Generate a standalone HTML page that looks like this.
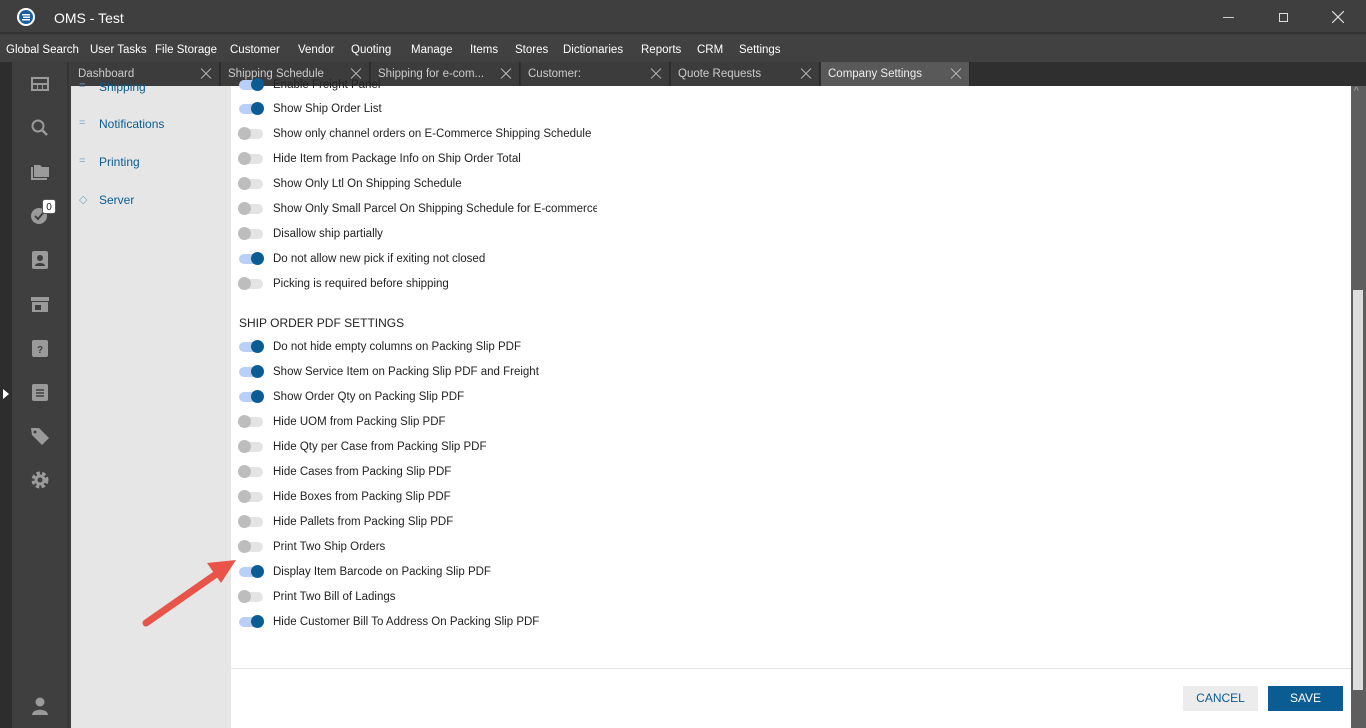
<!DOCTYPE html>
<html><head><style>
*{margin:0;padding:0;box-sizing:border-box}
body{width:1366px;height:728px;overflow:hidden;background:#3f3f3f;font-family:"Liberation Sans",sans-serif;position:relative}
.abs{position:absolute}
.title{left:0;top:0;width:1366px;height:34px;background:#3f3f3f;border-bottom:2px solid #333}
.menu{left:0;top:36px;width:1366px;height:26px;background:#414141;color:#fff;font-size:11.5px}
.menu span{position:absolute;top:8px}
.tabs{left:71px;top:62px;width:1295px;height:24px;background:#2f2f2f}
.tab{position:absolute;top:0;height:24px;width:149px;background:#3c3c3c;color:#ccc;font-size:11.5px;padding:6px 7px;border-right:1px solid #2a2a2a}
.tab.act{background:#595959;color:#eee}
.tab i{position:absolute;right:7px;top:6px;width:12px;height:12px}
.tab i::before,.tab i::after{content:"";position:absolute;left:-1px;top:5px;width:14px;height:1px;background:#bbb;transform:rotate(45deg)}
.tab i::after{transform:rotate(-45deg)}
.strip{left:0;top:62px;width:12px;height:666px;background:#2d2d2d}
.side{left:12px;top:62px;width:57px;height:666px;background:#3f3f3f;border-right:2px solid #353535}
.nav{left:71px;top:86px;width:160px;height:642px;background:#e6e6e6}
.nav div{position:absolute;left:28px;color:#0c5c94;font-size:12px}
.nav b{position:absolute;left:-20px;color:#7aa8c8;font-weight:normal;font-size:11px}
.content{left:231px;top:86px;width:1120px;height:642px;background:#fff}
.row{position:absolute;left:8px;font-size:11.5px;color:#222;height:16px;white-space:nowrap}
.tg{position:absolute;left:0;top:2px;width:24px;height:10px;border-radius:5px;background:#e4e4e4}
.tg::after{content:"";position:absolute;left:-1px;top:-2px;width:13px;height:13px;border-radius:50%;background:#bdbdbd}
.tg.on{background:#b9cff6}
.tg.on::after{left:12px;background:#0c5c94}
.row span{position:absolute;left:34px;top:1px;width:324px;overflow:hidden}
.scroll{left:1351px;top:86px;width:15px;height:642px;background:#5e5e5e}
.ic{position:absolute;left:29px;width:22px;height:20px;fill:#9a9a9a}
</style></head><body>
<div class="abs title">
<svg class="abs" style="left:16px;top:7px" width="20" height="20"><circle cx="10" cy="10" r="9" fill="#fff"/><circle cx="10" cy="10" r="7" fill="#1a5fa0"/><rect x="6" y="7" width="8" height="1.5" fill="#fff"/><rect x="7" y="9.5" width="7" height="1.5" fill="#fff"/><rect x="6" y="12" width="8" height="1.5" fill="#fff"/></svg>
<span class="abs" style="left:54px;top:10px;color:#fff;font-size:14px">OMS - Test</span>
<div class="abs" style="left:1223px;top:17px;width:11px;height:1px;background:#ccc"></div>
<div class="abs" style="left:1279px;top:13px;width:9px;height:9px;border:1px solid #ddd"></div>
<svg class="abs" style="left:1332px;top:11px" width="12" height="12"><path d="M0 0L12 12M12 0L0 12" stroke="#ddd" stroke-width="1.2"/></svg>
</div>
<div class="abs menu">
<span style="left:6px">Global Search</span><span style="left:90px">User Tasks</span><span style="left:155px">File Storage</span><span style="left:230px">Customer</span><span style="left:298px">Vendor</span><span style="left:351px">Quoting</span><span style="left:411px">Manage</span><span style="left:470px">Items</span><span style="left:515px">Stores</span><span style="left:563px">Dictionaries</span><span style="left:641px">Reports</span><span style="left:697px">CRM</span><span style="left:739px">Settings</span>
</div>
<div class="abs tabs">
<div class="tab" style="left:0">Dashboard<i></i></div>
<div class="tab" style="left:150px">Shipping Schedule<i></i></div>
<div class="tab" style="left:300px">Shipping for e-com...<i></i></div>
<div class="tab" style="left:450px">Customer:<i></i></div>
<div class="tab" style="left:600px">Quote Requests<i></i></div>
<div class="tab act" style="left:750px">Company Settings<i></i></div>
</div>
<div class="abs strip"></div>
<svg class="abs" style="left:2px;top:388px" width="8" height="12"><path d="M1 1L7 6L1 11Z" fill="#fff"/></svg>
<div class="abs side"></div>
<svg class="ic" style="top:74px" viewBox="0 0 22 20"><path d="M2 3h18v14H2z M4 5v4h14V5z M4 11v4h4v-4z M9 11v4h4v-4z M14 11v4h4v-4z" fill-rule="evenodd"/></svg>
<svg class="ic" style="top:118px" viewBox="0 0 22 20"><circle cx="9" cy="8" r="5.5" fill="none" stroke="#9a9a9a" stroke-width="2"/><path d="M13 12l5 5" stroke="#9a9a9a" stroke-width="2.5"/></svg>
<svg class="ic" style="top:162px" viewBox="0 0 22 20"><path d="M2 5h2v11h14v2H2z M5 3h6l2 2h7v10H5z"/></svg>
<svg class="ic" style="top:206px" viewBox="0 0 22 20"><circle cx="10" cy="10" r="8"/><path d="M6 10l3 3 5-6" stroke="#3f3f3f" stroke-width="2" fill="none"/></svg>
<div class="abs" style="left:42px;top:199px;width:14px;height:15px;background:#fff;border-radius:3px;font-size:10px;text-align:center;color:#222;line-height:15px;border:1px solid #555">0</div>
<svg class="ic" style="top:250px" viewBox="0 0 22 20"><rect x="3" y="1" width="16" height="18" rx="2"/><circle cx="11" cy="8" r="3" fill="#3f3f3f"/><path d="M6 16c0-4 10-4 10 0z" fill="#3f3f3f"/></svg>
<svg class="ic" style="top:294px" viewBox="0 0 22 20"><path d="M2 3h18v4H2z M3 8h16v10H3z"/><rect x="6" y="11" width="6" height="5" fill="#3f3f3f"/></svg>
<svg class="ic" style="top:338px" viewBox="0 0 22 20"><rect x="3" y="2" width="16" height="17" rx="2"/><text x="11" y="15" font-size="10" text-anchor="middle" fill="#3f3f3f" font-family="Liberation Sans" font-weight="bold">?</text></svg>
<svg class="ic" style="top:382px" viewBox="0 0 22 20"><rect x="3" y="2" width="16" height="17" rx="2"/><path d="M7 8h8M7 11h8M7 14h8" stroke="#3f3f3f" stroke-width="1.5"/></svg>
<svg class="ic" style="top:426px" viewBox="0 0 22 20"><path d="M2 2h8l10 10-7 7L3 9z"/><circle cx="6" cy="6" r="1.5" fill="#3f3f3f"/></svg>
<svg class="ic" style="top:470px" viewBox="0 0 22 20"><circle cx="11" cy="10" r="6" fill="none" stroke="#9a9a9a" stroke-width="5" stroke-dasharray="3 2"/><circle cx="11" cy="10" r="5.5"/><circle cx="11" cy="10" r="2.5" fill="#3f3f3f"/></svg>
<svg class="ic" style="top:696px" viewBox="0 0 22 20"><circle cx="11" cy="6" r="4.5"/><path d="M3 19c0-7 16-7 16 0z"/></svg>
<div class="abs nav">
<div style="top:-6px"><b>=</b>Shipping</div>
<div style="top:31px"><b>=</b>Notifications</div>
<div style="top:69px"><b>=</b>Printing</div>
<div style="top:107px"><b>◇</b>Server</div>
</div>
<div class="abs content">
<div class="row" style="top:-8px"><i class="tg on"></i><span>Enable Freight Panel</span></div>
<div class="row" style="top:16px"><i class="tg on"></i><span>Show Ship Order List</span></div>
<div class="row" style="top:41px"><i class="tg"></i><span>Show only channel orders on E-Commerce Shipping Schedule</span></div>
<div class="row" style="top:66px"><i class="tg"></i><span>Hide Item from Package Info on Ship Order Total</span></div>
<div class="row" style="top:91px"><i class="tg"></i><span>Show Only Ltl On Shipping Schedule</span></div>
<div class="row" style="top:116px"><i class="tg"></i><span>Show Only Small Parcel On Shipping Schedule for E-commerce</span></div>
<div class="row" style="top:141px"><i class="tg"></i><span>Disallow ship partially</span></div>
<div class="row" style="top:166px"><i class="tg on"></i><span>Do not allow new pick if exiting not closed</span></div>
<div class="row" style="top:191px"><i class="tg"></i><span>Picking is required before shipping</span></div>
<div class="row" style="top:230px;left:8px;font-size:12px;color:#222">SHIP ORDER PDF SETTINGS</div>
<div class="row" style="top:254px"><i class="tg on"></i><span>Do not hide empty columns on Packing Slip PDF</span></div>
<div class="row" style="top:279px"><i class="tg on"></i><span>Show Service Item on Packing Slip PDF and Freight</span></div>
<div class="row" style="top:304px"><i class="tg on"></i><span>Show Order Qty on Packing Slip PDF</span></div>
<div class="row" style="top:329px"><i class="tg"></i><span>Hide UOM from Packing Slip PDF</span></div>
<div class="row" style="top:354px"><i class="tg"></i><span>Hide Qty per Case from Packing Slip PDF</span></div>
<div class="row" style="top:379px"><i class="tg"></i><span>Hide Cases from Packing Slip PDF</span></div>
<div class="row" style="top:404px"><i class="tg"></i><span>Hide Boxes from Packing Slip PDF</span></div>
<div class="row" style="top:429px"><i class="tg"></i><span>Hide Pallets from Packing Slip PDF</span></div>
<div class="row" style="top:454px"><i class="tg"></i><span>Print Two Ship Orders</span></div>
<div class="row" style="top:479px"><i class="tg on"></i><span>Display Item Barcode on Packing Slip PDF</span></div>
<div class="row" style="top:504px"><i class="tg"></i><span>Print Two Bill of Ladings</span></div>
<div class="row" style="top:529px"><i class="tg on"></i><span>Hide Customer Bill To Address On Packing Slip PDF</span></div>
<div class="abs" style="left:0;top:582px;width:1120px;height:1px;background:#e6e6e6"></div>
<div class="abs" style="left:952px;top:600px;width:75px;height:25px;background:#ececec;color:#0c5c94;font-size:12px;text-align:center;line-height:25px">CANCEL</div>
<div class="abs" style="left:1037px;top:600px;width:75px;height:25px;background:#0c5c94;color:#fff;font-size:12px;text-align:center;line-height:25px">SAVE</div>
</div>
<div class="abs scroll"><div class="abs" style="left:2px;top:204px;width:10px;height:400px;background:#ddd"></div><span class="abs" style="left:3px;top:0;color:#aaa;font-size:10px">^</span></div>
<svg class="abs" style="left:0;top:0" width="1366" height="728"><line x1="146" y1="623" x2="222" y2="570" stroke="#e8544a" stroke-width="7" stroke-linecap="round"/><path d="M236 560L207 563L221 583Z" fill="#e8544a"/></svg>
</body></html>
